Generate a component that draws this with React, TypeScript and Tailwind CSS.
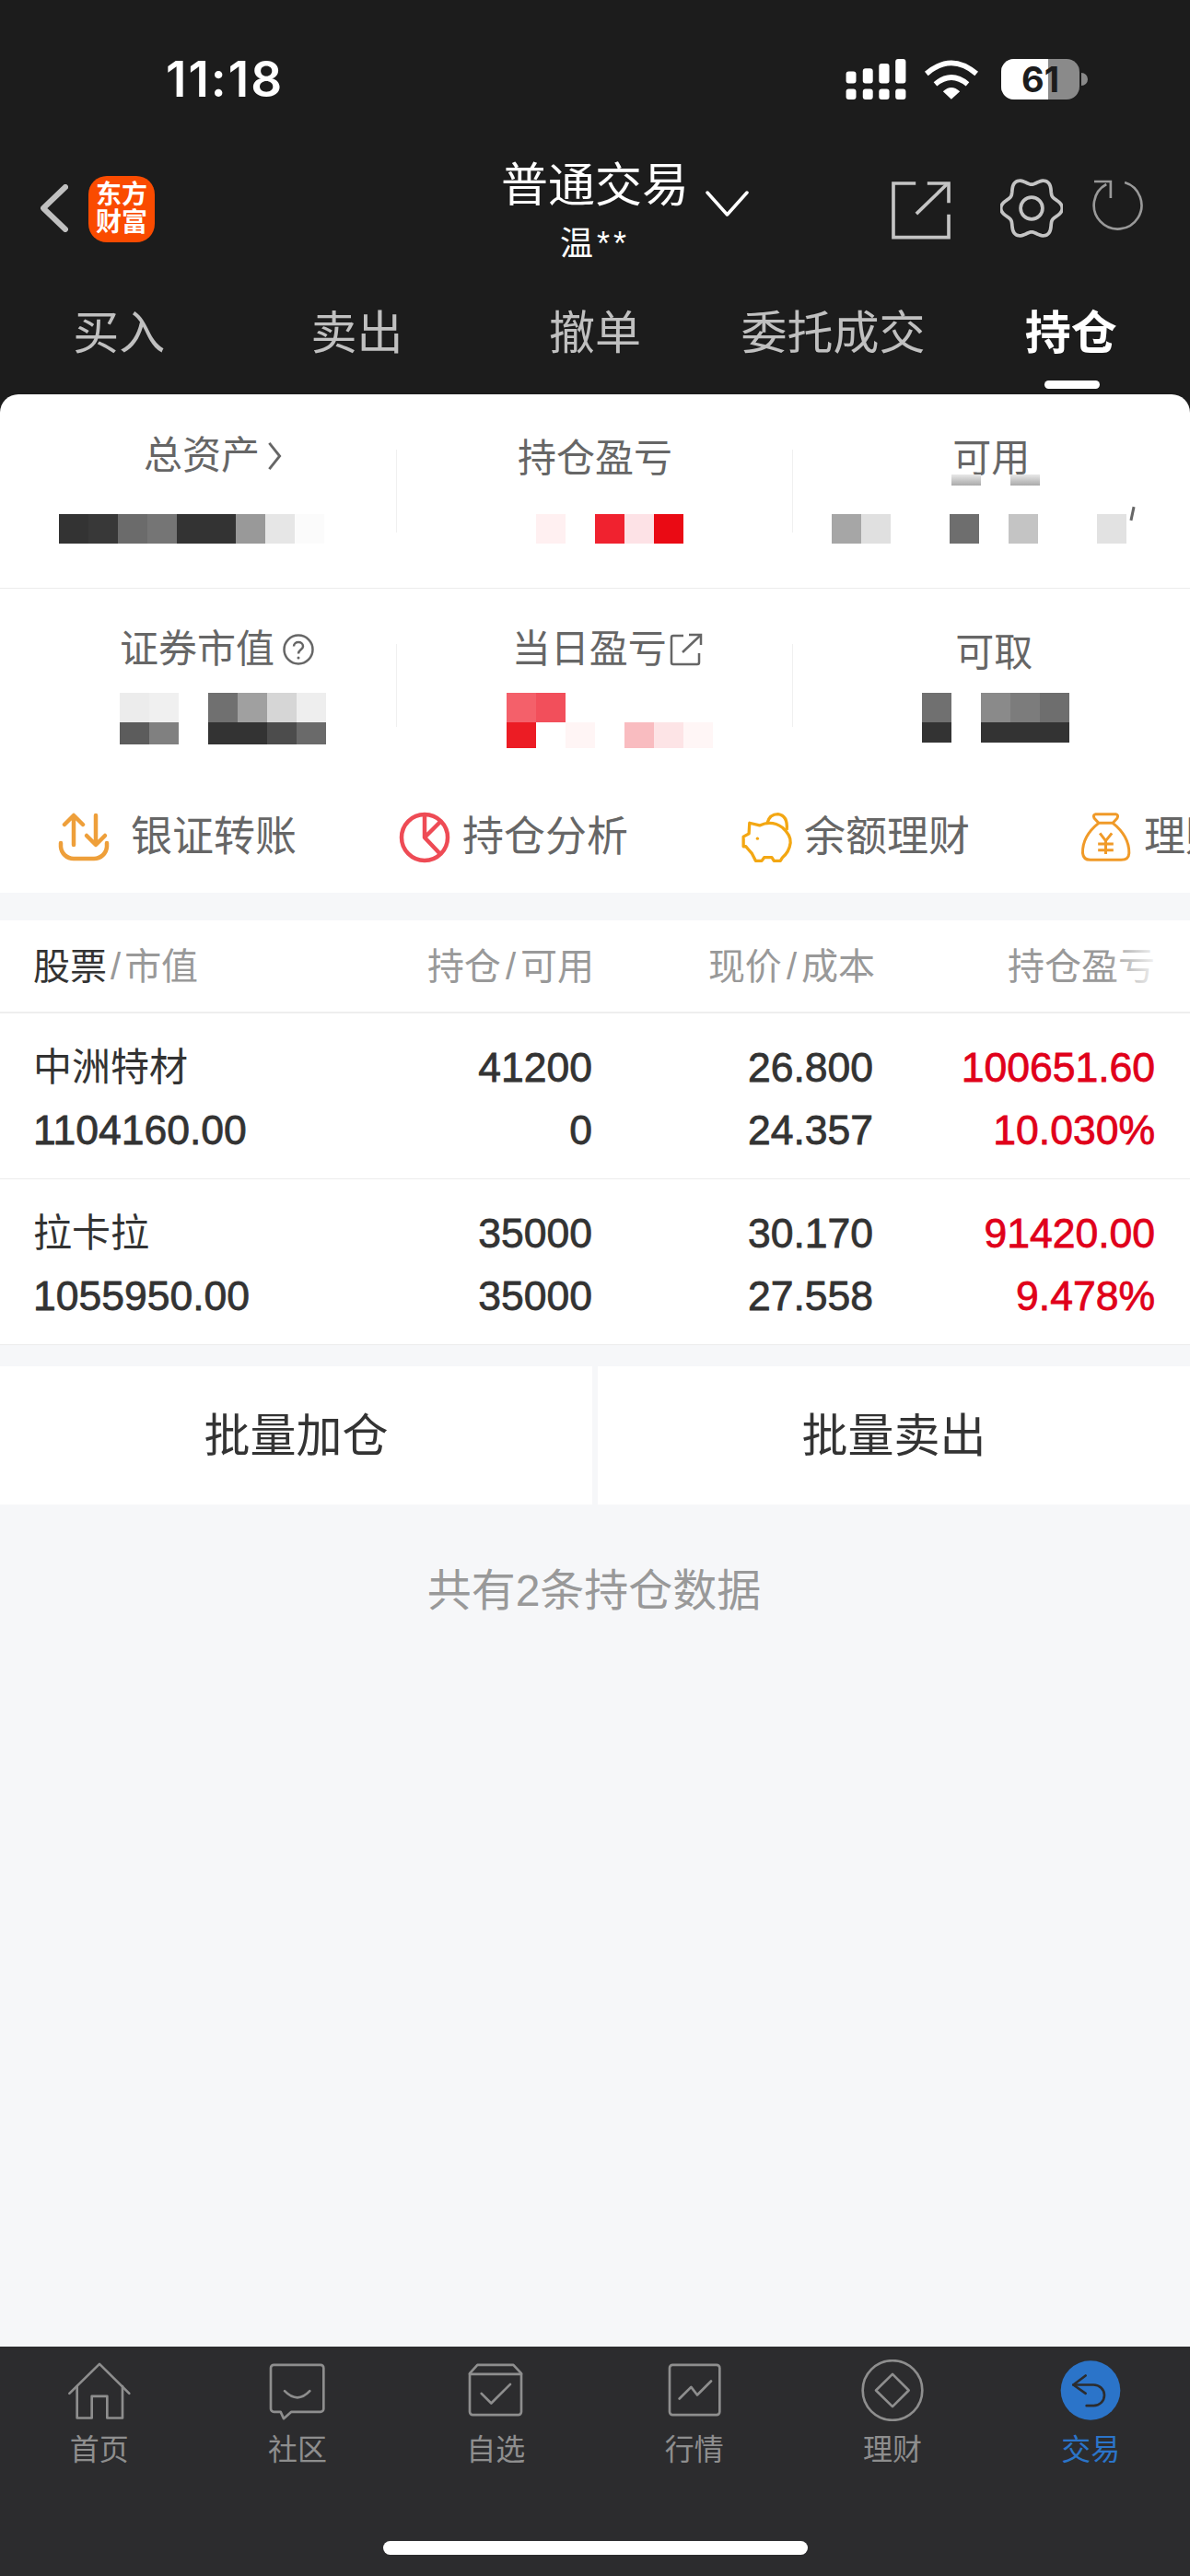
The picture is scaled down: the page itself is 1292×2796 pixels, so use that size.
const tabs = ["买入", "卖出", "撤单", "委托成交", "持仓"];

const gearPath = (() => {
  let pts: string[] = [];
  for (let i = 0; i < 144; i++) {
    let a = (i / 144) * Math.PI * 2;
    let r = 87 + 11 * Math.cos(6 * a);
    pts.push(`${(100 + r * Math.cos(a)).toFixed(1)} ${(100 + r * Math.sin(a)).toFixed(1)}`);
  }
  return "M" + pts.join("L") + "Z";
})();

function Mosaic({ cells, className }: { cells: string[]; className?: string }) {
  return (
    <div className={"flex " + (className || "")}>
      {cells.map((c, i) => (
        <div key={i} className={"w-8 h-full " + c} />
      ))}
    </div>
  );
}

function StatusBar() {
  return (
    <div className="h-[174px] pt-[64px] pl-[180px] pr-[111px] flex justify-between items-start">
      <span className="font-['Inter',sans-serif] font-semibold text-[53px] leading-[44px] text-white tracking-[2px]">11:18</span>
      <div className="flex items-start">
        <svg viewBox="52 72 196 133" className="w-[66px] h-[44px]" fill="#fff">
          <rect x="52" y="113" width="33" height="39" rx="9" />
          <rect x="107" y="103" width="33" height="49" rx="9" />
          <rect x="160" y="87" width="34" height="65" rx="9" />
          <rect x="214" y="72" width="34" height="80" rx="9" />
          <rect x="52" y="170" width="33" height="35" rx="9" />
          <rect x="107" y="170" width="33" height="35" rx="9" />
          <rect x="160" y="170" width="34" height="35" rx="9" />
          <rect x="214" y="170" width="34" height="35" rx="9" />
        </svg>
        <svg viewBox="310 70 185 135" className="ml-[18px] w-[62px] h-[45px]" fill="none" stroke="#fff" strokeWidth="17">
          <path d="M321 118Q402 48 484 118" />
          <path d="M350 152Q402 108 455 152" />
          <path d="M375 176Q402 150 430 176L402 201Z" fill="#fff" stroke="none" />
        </svg>
        <div className="ml-[23px] relative w-[85px] h-[44px]">
          <div className="w-full h-full rounded-[14px] overflow-hidden bg-[#8a8a8a]">
            <div className="w-[51px] h-full bg-white" />
          </div>
          <span className="absolute inset-0 flex items-center justify-center font-['Inter',sans-serif] font-bold text-[38px] leading-none text-[#1c1c1c]">61</span>
        </div>
        <div className="ml-[2px] mt-[15px] w-[7px] h-[14px] rounded-r-full bg-[#8a8a8a]" />
      </div>
    </div>
  );
}

function TopNav() {
  return (
    <div className="h-[114px] grid grid-cols-3 items-start">
      <div className="flex items-start pl-[44px] pt-[17px]">
        <svg viewBox="0 0 30 52" className="mt-[9px] w-[30px] h-[52px]" fill="none" stroke="#c0c0c0" strokeWidth="6" strokeLinecap="round" strokeLinejoin="round">
          <path d="M27 3L3 26L27 49" />
        </svg>
        <div className="ml-[22px] w-[72px] h-[72px] rounded-[20px] bg-[#fa4b00] flex flex-col items-center justify-center text-white font-bold text-[28px] leading-[30px]">
          <span>东方</span>
          <span>财富</span>
        </div>
      </div>
      <div className="flex flex-col items-center">
        <div className="relative text-[51px] leading-[56px] text-white">
          普通交易
          <svg viewBox="0 0 47 28" className="absolute left-[222px] top-[33px] w-[47px] h-[28px]" fill="none" stroke="#fff" strokeWidth="3.5" strokeLinecap="round" strokeLinejoin="round">
            <path d="M2 2L23.500 26L45 2" />
          </svg>
        </div>
        <span className="mt-[15px] text-[36px] leading-[40px] tracking-[4px] text-white">温**</span>
      </div>
      <div className="flex items-start pt-[19px] pl-[105px]">
        <svg viewBox="195 460 205 205" className="w-[68px] h-[68px]" fill="none" stroke="#c4c4c4" strokeWidth="11">
          <path d="M280 478H207V655H388V580" />
          <path d="M318 478H388V542" />
          <path d="M282 578L385 478" />
        </svg>
        <svg viewBox="0 0 200 200" className="ml-[52px] -mt-[1px] w-[68px] h-[68px]" fill="none" stroke="#c4c4c4" strokeWidth="11">
          <path d={gearPath} />
          <circle cx="100" cy="100" r="35" />
        </svg>
        <svg viewBox="855 470 176 178" className="ml-[30px] mt-[1px] w-[59px] h-[59px]" fill="none" stroke="#999" strokeWidth="8">
          <path d="M966 482A78 78 0 1 1 906 488" />
          <path d="M866 479H920V533" />
        </svg>
      </div>
    </div>
  );
}

function Tabs() {
  return (
    <div className="h-[140px] grid grid-cols-5">
      {tabs.map((t, i) => (
        <div key={t} className="relative flex justify-center pt-[46px]">
          <span className={"text-[50px] leading-[56px] " + (i == 4 ? "text-white font-bold" : "text-[#c0c0c0]")}>{t}</span>
          {i == 4 && <div className="absolute left-[100px] top-[125px] w-[60px] h-[9px] rounded-full bg-white" />}
        </div>
      ))}
    </div>
  );
}

function Cell({ sep = true, className, children }: { sep?: boolean; className: string; children: React.ReactNode }) {
  return (
    <div className={"relative " + className}>
      {children}
      {sep && <div className="absolute right-0 top-[60px] h-[90px] w-px bg-[#f0f0f0]" />}
    </div>
  );
}

function Summary() {
  return (
    <div className="bg-white rounded-t-[20px]">
      <div className="h-[211px] border-b border-[#ececec] grid grid-cols-3 text-[42px] leading-[46px] text-[#666]">
        <Cell className="pt-[44px]">
          <div className="flex items-center pl-[156px]">
            总资产
            <svg viewBox="0 0 18 36" className="ml-[7px] w-[18px] h-[34px]" fill="none" stroke="#666" strokeWidth="3">
              <path d="M3 3L15 18L3 33" />
            </svg>
          </div>
          <Mosaic className="mt-[40px] ml-[64px] h-8" cells={["bg-[#333]", "bg-[#383838]", "bg-[#6b6b6b]", "bg-[#757575]", "bg-[#333]", "bg-[#333]", "bg-[#999]", "bg-[#e6e6e6]", "bg-[#fbfbfb]"]} />
        </Cell>
        <Cell className="pt-[47px]">
          <div className="text-center">持仓盈亏</div>
          <Mosaic className="mt-[37px] ml-[151px] h-8" cells={["bg-[#fff0f1]", "bg-white", "bg-[#f0222f]", "bg-[#fde2e6]", "bg-[#ea0a14]"]} />
        </Cell>
        <Cell sep={false} className="pt-[47px]">
          <div className="pl-[173px]">可用</div>
          <div className="absolute left-[172px] top-[87px] flex gap-8 h-3">
            <div className="w-8 bg-gradient-to-b from-[#e8e8e8] to-[#aaa]" />
            <div className="w-8 bg-gradient-to-b from-[#e8e8e8] to-[#aaa]" />
          </div>
          <Mosaic className="mt-[37px] ml-[42px] h-8" cells={["bg-[#a6a6a6]", "bg-[#e0e0e0]", "bg-white", "bg-white", "bg-[#6e6e6e]", "bg-white", "bg-[#c4c4c4]", "bg-white", "bg-white", "bg-[#e2e2e2]"]} />
          <div className="absolute left-[367px] top-[122px] w-[3px] h-[15px] rotate-12 bg-[#666]" />
        </Cell>
      </div>
      <div className="h-[191px] grid grid-cols-3 text-[42px] leading-[46px] text-[#666]">
        <Cell className="pt-[43px]">
          <div className="flex items-center pl-[130px]">
            证券市值
            <svg viewBox="0 0 36 36" className="ml-[8px] w-[36px] h-[36px]" fill="none" stroke="#666" strokeWidth="2.500">
              <circle cx="18" cy="18" r="15.500" />
              <path d="M13 14.500C13 8.500 23 8.500 23 14.500C23 18 18 18 18 22.500" />
              <circle cx="18" cy="27" r="1.500" fill="#666" stroke="none" />
            </svg>
          </div>
          <Mosaic className="mt-[24px] ml-[130px] h-8" cells={["bg-[#ececec]", "bg-[#f0f0f0]", "bg-white", "bg-[#707070]", "bg-[#a0a0a0]", "bg-[#d6d6d6]", "bg-[#eee]"]} />
          <Mosaic className="ml-[130px] h-6" cells={["bg-[#5c5c5c]", "bg-[#808080]", "bg-white", "bg-[#333]", "bg-[#333]", "bg-[#4c4c4c]", "bg-[#6a6a6a]"]} />
        </Cell>
        <Cell className="pt-[43px]">
          <div className="flex items-center pl-[125px]">
            当日盈亏
            <svg viewBox="0 0 36 36" className="ml-[3px] w-[36px] h-[36px]" fill="none" stroke="#666" strokeWidth="2.500">
              <path d="M15 3H4a2 2 0 0 0-2 2V32a2 2 0 0 0 2 2H30a2 2 0 0 0 2-2V22" />
              <path d="M21 2H34V13" />
              <path d="M14 21L33 3" />
            </svg>
          </div>
          <Mosaic className="mt-[24px] ml-[119px] h-8" cells={["bg-[#f4606a]", "bg-[#f24f5b]"]} />
          <Mosaic className="ml-[119px] h-7" cells={["bg-[#ec1c24]", "bg-white", "bg-[#fff5f5]", "bg-white", "bg-[#f9bcc0]", "bg-[#fde4e6]", "bg-[#fff6f6]"]} />
        </Cell>
        <Cell sep={false} className="pt-[47px]">
          <div className="pl-[176px]">可取</div>
          <Mosaic className="mt-[20px] ml-[140px] h-8" cells={["bg-[#707070]", "bg-white", "bg-[#8a8a8a]", "bg-[#7c7c7c]", "bg-[#6e6e6e]"]} />
          <Mosaic className="ml-[140px] h-[22px]" cells={["bg-[#333]", "bg-white", "bg-[#333]", "bg-[#333]", "bg-[#333]"]} />
        </Cell>
      </div>
    </div>
  );
}

function Actions() {
  return (
    <div className="h-[139px] bg-white overflow-hidden flex items-center whitespace-nowrap text-[45px] leading-[50px] text-[#666] pt-[18px]">
      <svg viewBox="0 0 56 54" className="ml-[63px] w-[56px] h-[54px] shrink-0" fill="none" stroke="#ee9f3a" strokeWidth="4.500" strokeLinecap="round" strokeLinejoin="round">
        <path d="M17 35V4M7 13L17 3L27 13" />
        <path d="M41 3V34M31 25L41 35L51 25" />
        <path d="M3 33V37A14 14 0 0 0 17 50H39A14 14 0 0 0 53 37V33" />
      </svg>
      <span className="ml-[23px]">银证转账</span>
      <svg viewBox="0 0 56 56" className="ml-[111px] w-[56px] h-[56px] shrink-0" fill="none" stroke="#ee4b55" strokeWidth="4.500" strokeLinejoin="round">
        <circle cx="28" cy="28" r="25" />
        <path d="M28 3V28L45 46M28 28L45 11" />
      </svg>
      <span className="ml-[13px]">持仓分析</span>
      <svg viewBox="60 55 180 175" className="ml-[121px] w-[60px] h-[58px] shrink-0" fill="none" stroke="#f3a713" strokeWidth="10" strokeLinejoin="round">
        <path d="M92 95L125 103Q165 85 200 110Q228 135 226 160Q222 190 200 208L193 219H172L165 208H140L132 219H112L100 195Q88 182 80 172H72V140L90 130Z" />
        <path d="M150 95Q158 66 185 66Q218 70 214 118" />
        <circle cx="118" cy="146" r="5" fill="#f3a713" stroke="none" />
      </svg>
      <span className="ml-[10px]">余额理财</span>
      <svg viewBox="1170 60 170 165" className="ml-[119px] w-[57px] h-[55px] shrink-0" fill="none" stroke="#f09a28" strokeWidth="9" strokeLinejoin="round">
        <path d="M1222 68H1288Q1298 70 1292 82L1278 97H1232L1218 82Q1212 70 1222 68Z" />
        <path d="M1232 97Q1178 140 1180 195Q1182 217 1205 217H1305Q1330 217 1331 195Q1332 140 1278 97" />
        <path d="M1236 130L1255 155L1275 130M1230 165H1280M1230 185H1280M1255 155V198" />
      </svg>
      <span className="ml-[13px]">理财</span>
    </div>
  );
}

function TableHead() {
  return (
    <div className="relative h-[101px] bg-white border-b-2 border-[#eeeeee] pl-[36px] pr-[38px] grid grid-cols-[301px_306px_305px_306px] items-center text-[40px] leading-[46px] text-[#999]">
      <div>
        <span className="text-[#333]">股票</span>
        <span className="mx-[4px]">/</span>市值
      </div>
      <div className="text-right -mr-[2px]">持仓<span className="mx-[5px]">/</span>可用</div>
      <div className="text-right -mr-[2px]">现价<span className="mx-[5px]">/</span>成本</div>
      <div className="text-right">持仓盈亏</div>
      <div className="absolute right-[30px] top-[20px] w-[60px] h-[60px] bg-gradient-to-r from-transparent to-white" />
    </div>
  );
}

function StockRow({ name, value, qty, avail, price, cost, profit, pct }: Record<string, string>) {
  return (
    <div className="h-[180px] bg-white border-b border-[#ececec] pt-[25px] pl-[36px] pr-[38px] grid grid-cols-[301px_306px_305px_306px] auto-rows-[68px] items-center text-[44.500px] leading-[68px] text-[#333] [-webkit-text-stroke:0.8px]">
      <div className="text-[42px] [-webkit-text-stroke:0px]">{name}</div>
      <div className="text-right">{qty}</div>
      <div className="text-right">{price}</div>
      <div className="text-right text-[#e0001a]">{profit}</div>
      <div>{value}</div>
      <div className="text-right">{avail}</div>
      <div className="text-right">{cost}</div>
      <div className="text-right text-[#e0001a]">{pct}</div>
    </div>
  );
}

const navItems = [
  {
    label: "首页",
    icon: (
      <>
        <path d="M52 110L150 14L247 110" />
        <path d="M77 87V190H125V119H175V190H225V87" />
      </>
    ),
  },
  {
    label: "社区",
    icon: (
      <>
        <path d="M73 17H225a10 10 0 0 1 10 10V160a10 10 0 0 1-10 10H130L105 192L95 170H73a10 10 0 0 1-10-10V27a10 10 0 0 1 10-10Z" />
        <path d="M108 102Q150 145 190 102" />
      </>
    ),
  },
  {
    label: "自选",
    icon: (
      <>
        <path d="M66 45L91 17H208L234 45V170a10 10 0 0 1-10 10H76a10 10 0 0 1-10-10Z" />
        <path d="M66 47H234" />
        <path d="M104 110L136 142L198 80" />
      </>
    ),
  },
  {
    label: "行情",
    icon: (
      <>
        <path d="M79 17H222a10 10 0 0 1 10 10V170a10 10 0 0 1-10 10H79a10 10 0 0 1-10-10V27a10 10 0 0 1 10-10Z" />
        <path d="M101 127L139 89L159 115L204 70" />
      </>
    ),
  },
  {
    label: "理财",
    icon: (
      <>
        <circle cx="150" cy="100" r="97" />
        <path d="M150 47L203 100L150 153L96 100Z" />
      </>
    ),
  },
];

function BottomNav() {
  return (
    <div className="h-[249px] bg-[#2c2c2e] flex flex-col">
      <div className="grid grid-cols-6 pt-[14px]">
        {navItems.map((n) => (
          <div key={n.label} className="flex flex-col items-center">
            <svg viewBox="0 0 300 200" className="w-[100px] h-[67px]" fill="none" stroke="#8e8e8e" strokeWidth="8" strokeLinejoin="round" strokeLinecap="round">
              {n.icon}
            </svg>
            <span className="mt-[11px] text-[32px] leading-[40px] text-[#8e8e8e]">{n.label}</span>
          </div>
        ))}
        <div className="flex flex-col items-center">
          <svg viewBox="0 0 300 200" className="w-[100px] h-[67px]" fill="none" stroke="#2c2c2e" strokeWidth="8" strokeLinejoin="round" strokeLinecap="round">
            <circle cx="150" cy="100" r="97" fill="#2b74c9" stroke="none" />
            <path d="M134 52L94 82L134 110" />
            <path d="M94 82H160a35 34 0 0 1 0 68H137" />
          </svg>
          <span className="mt-[11px] text-[32px] leading-[40px] text-[#2b74c9]">交易</span>
        </div>
      </div>
      <div className="mt-[79px] mx-auto w-[461px] h-[15px] rounded-full bg-white" />
    </div>
  );
}

export default function App() {
  return (
    <div className="w-[1292px] h-[2796px] flex flex-col overflow-hidden bg-[#f6f7f9] font-['Liberation_Sans','Noto_Sans_CJK_SC',sans-serif]">
      <div className="bg-[#1c1c1c]">
        <StatusBar />
        <TopNav />
        <Tabs />
      </div>
      <div className="bg-[#1c1c1c]">
        <Summary />
      </div>
      <Actions />
      <div className="h-[30px]" />
      <TableHead />
      <StockRow name="中洲特材" value="1104160.00" qty="41200" avail="0" price="26.800" cost="24.357" profit="100651.60" pct="10.030%" />
      <StockRow name="拉卡拉" value="1055950.00" qty="35000" avail="35000" price="30.170" cost="27.558" profit="91420.00" pct="9.478%" />
      <div className="mt-[23px] h-[150px] flex gap-[6px] text-[50px] text-[#333]">
        <div className="flex-1 bg-white flex items-center justify-center pt-[3px]">批量加仓</div>
        <div className="flex-1 bg-white flex items-center justify-center pt-[3px]">批量卖出</div>
      </div>
      <div className="flex-1 pt-[66px] pr-[2px] text-center text-[48px] leading-[56px] text-[#999]">共有2条持仓数据</div>
      <BottomNav />
    </div>
  );
}
